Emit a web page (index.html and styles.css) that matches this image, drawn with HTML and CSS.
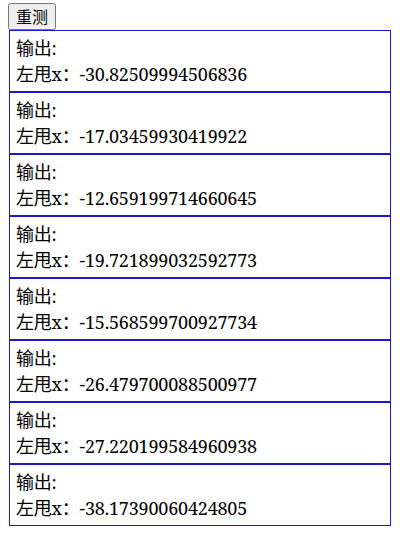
FILE: index.html
```html
<!DOCTYPE html>
<html lang="zh-CN">
<head>
  <meta charset="UTF-8" />
  <meta name="viewport" content="width=device-width, initial-scale=1.0"/>
  <title>左甩</title>
  <link rel="stylesheet" href="styles.css">
</head>
<body>
  <button class="btn">重测</button>
  <div class="list">
    <div class="item">输出:<br>左甩x：-30.82509994506836</div>
    <div class="item">输出:<br>左甩x：-17.03459930419922</div>
    <div class="item">输出:<br>左甩x：-12.659199714660645</div>
    <div class="item">输出:<br>左甩x：-19.721899032592773</div>
    <div class="item">输出:<br>左甩x：-15.568599700927734</div>
    <div class="item">输出:<br>左甩x：-26.479700088500977</div>
    <div class="item">输出:<br>左甩x：-27.220199584960938</div>
    <div class="item">输出:<br>左甩x：-38.17390060424805</div>
  </div>
</body>
</html>
```

FILE: styles.css
```css
body {
  margin: 3px 8px;
  font-family: "Noto Serif", "Liberation Serif", "Noto Sans CJK SC", serif;
}
.btn {
  font-family: "Noto Sans CJK SC", sans-serif;
  font-size: 16px;
  line-height: 19px;
  padding: 2px 6px;
}
.list {
  margin: 0 1px;
}
.item {
  border: 1px solid #1a1acc;
  padding: 4px 6px;
  font-size: 18px;
  letter-spacing: -0.2px;
  line-height: 26px;
}
```
